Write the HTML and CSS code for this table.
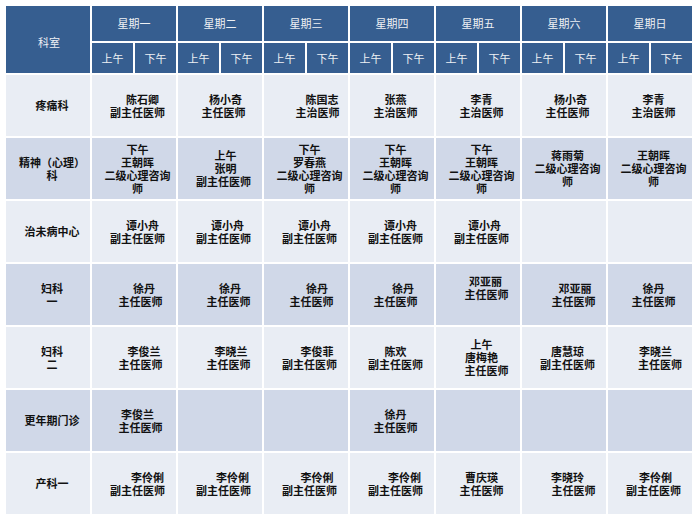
FILE: index.html
```html
<!DOCTYPE html>
<html lang="zh-CN">
<head>
<meta charset="utf-8">
<title>门诊排班表</title>
<link rel="stylesheet" href="styles.css">
</head>
<body>
<div class="schedule">
  <div class="hd corner">科室</div>
  <div class="hd day">星期一</div>
  <div class="hd day">星期二</div>
  <div class="hd day">星期三</div>
  <div class="hd day">星期四</div>
  <div class="hd day">星期五</div>
  <div class="hd day">星期六</div>
  <div class="hd day">星期日</div>
  <div class="hd half">上午</div><div class="hd half">下午</div>
  <div class="hd half">上午</div><div class="hd half">下午</div>
  <div class="hd half">上午</div><div class="hd half">下午</div>
  <div class="hd half">上午</div><div class="hd half">下午</div>
  <div class="hd half">上午</div><div class="hd half">下午</div>
  <div class="hd half">上午</div><div class="hd half">下午</div>
  <div class="hd half">上午</div><div class="hd half">下午</div>

  <!-- 疼痛科 -->
  <div class="cell label light"><span class="ln">疼痛科</span></div>
  <div class="cell slot light"><span class="ln i10">陈石卿</span><span class="ln">副主任医师</span></div>
  <div class="cell slot light"><span class="ln i4">杨小奇</span><span class="ln">主任医师</span></div>
  <div class="cell slot light"><span class="ln i25">陈国志</span><span class="ln i16">主治医师</span></div>
  <div class="cell slot light"><span class="ln">张燕</span><span class="ln">主治医师</span></div>
  <div class="cell slot light"><span class="ln">李青</span><span class="ln">主治医师</span></div>
  <div class="cell slot light"><span class="ln i6">杨小奇</span><span class="ln">主任医师</span></div>
  <div class="cell slot light"><span class="ln">李青</span><span class="ln">主治医师</span></div>

  <!-- 精神（心理）科 -->
  <div class="cell label dark"><span class="ln">精神（心理）</span><span class="ln">科</span></div>
  <div class="cell slot dark"><span class="ln">下午</span><span class="ln">王朝晖</span><span class="ln">二级心理咨询</span><span class="ln">师</span></div>
  <div class="cell slot dark"><span class="ln i4">上午</span><span class="ln i4">张明</span><span class="ln">副主任医师</span></div>
  <div class="cell slot dark"><span class="ln">下午</span><span class="ln">罗春燕</span><span class="ln">二级心理咨询</span><span class="ln">师</span></div>
  <div class="cell slot dark"><span class="ln">下午</span><span class="ln">王朝晖</span><span class="ln">二级心理咨询</span><span class="ln">师</span></div>
  <div class="cell slot dark"><span class="ln">下午</span><span class="ln">王朝晖</span><span class="ln">二级心理咨询</span><span class="ln">师</span></div>
  <div class="cell slot dark"><span class="ln">蒋雨菊</span><span class="ln">二级心理咨询</span><span class="ln">师</span></div>
  <div class="cell slot dark"><span class="ln">王朝晖</span><span class="ln">二级心理咨询</span><span class="ln">师</span></div>

  <!-- 治未病中心 -->
  <div class="cell label light"><span class="ln">治未病中心</span></div>
  <div class="cell slot light"><span class="ln i10">谭小舟</span><span class="ln">副主任医师</span></div>
  <div class="cell slot light"><span class="ln i8">谭小舟</span><span class="ln">副主任医师</span></div>
  <div class="cell slot light"><span class="ln i10">谭小舟</span><span class="ln">副主任医师</span></div>
  <div class="cell slot light"><span class="ln i10">谭小舟</span><span class="ln">副主任医师</span></div>
  <div class="cell slot light"><span class="ln i6">谭小舟</span><span class="ln">副主任医师</span></div>
  <div class="cell slot light"></div>
  <div class="cell slot light"></div>

  <!-- 妇科一 -->
  <div class="cell label dark"><span class="ln">妇科</span><span class="ln">一</span></div>
  <div class="cell slot dark"><span class="ln i13">徐丹</span><span class="ln i6">主任医师</span></div>
  <div class="cell slot dark"><span class="ln i13">徐丹</span><span class="ln i10">主任医师</span></div>
  <div class="cell slot dark"><span class="ln i15">徐丹</span><span class="ln i4">主任医师</span></div>
  <div class="cell slot dark"><span class="ln i15">徐丹</span><span class="ln">主任医师</span></div>
  <div class="cell slot dark"><span class="ln i8">邓亚丽</span><span class="ln i10">主任医师</span><span class="ln blank"></span></div>
  <div class="cell slot dark"><span class="ln i15">邓亚丽</span><span class="ln i12">主任医师</span></div>
  <div class="cell slot dark"><span class="ln">徐丹</span><span class="ln">主任医师</span></div>

  <!-- 妇科二 -->
  <div class="cell label light"><span class="ln">妇科</span><span class="ln">二</span></div>
  <div class="cell slot light"><span class="ln i13">李俊兰</span><span class="ln i6">主任医师</span></div>
  <div class="cell slot light"><span class="ln i15">李晓兰</span><span class="ln i10">主任医师</span></div>
  <div class="cell slot light"><span class="ln i15">李俊菲</span><span class="ln">副主任医师</span></div>
  <div class="cell slot light"><span class="ln">陈欢</span><span class="ln">副主任医师</span></div>
  <div class="cell slot light"><span class="ln">上午</span><span class="ln">唐梅艳</span><span class="ln i10">主任医师</span></div>
  <div class="cell slot light"><span class="ln">唐慧琼</span><span class="ln">副主任医师</span></div>
  <div class="cell slot light"><span class="ln i4">李晓兰</span><span class="ln i13">主任医师</span></div>

  <!-- 更年期门诊 -->
  <div class="cell label dark"><span class="ln">更年期门诊</span></div>
  <div class="cell slot dark"><span class="ln">李俊兰</span><span class="ln i6">主任医师</span></div>
  <div class="cell slot dark"></div>
  <div class="cell slot dark"></div>
  <div class="cell slot dark"><span class="ln">徐丹</span><span class="ln">主任医师</span></div>
  <div class="cell slot dark"></div>
  <div class="cell slot dark"></div>
  <div class="cell slot dark"></div>

  <!-- 产科一 -->
  <div class="cell label light"><span class="ln">产科一</span></div>
  <div class="cell slot light"><span class="ln i20">李伶俐</span><span class="ln">副主任医师</span></div>
  <div class="cell slot light"><span class="ln i18">李伶俐</span><span class="ln">副主任医师</span></div>
  <div class="cell slot light"><span class="ln i15">李伶俐</span><span class="ln">副主任医师</span></div>
  <div class="cell slot light"><span class="ln i18">李伶俐</span><span class="ln">副主任医师</span></div>
  <div class="cell slot light"><span class="ln">曹庆瑛</span><span class="ln">主任医师</span></div>
  <div class="cell slot light"><span class="ln">李晓玲</span><span class="ln i12">主任医师</span></div>
  <div class="cell slot light"><span class="ln i4">李伶俐</span><span class="ln">副主任医师</span></div>
</div>
</body>
</html>
```
FILE: styles.css
```css
html, body {
  margin: 0;
  padding: 0;
  background: #ffffff;
}

body {
  font-family: "Noto Sans CJK SC", "Noto Sans", sans-serif;
}

.schedule {
  margin: 6px 0 0 6px;
  display: grid;
  grid-template-columns: 84px repeat(14, 41px);
  grid-template-rows: 35px 30px repeat(7, 61px);
  gap: 2px;
  width: max-content;
}

.hd {
  background: #365e90;
  color: #eef0f4;
  font-size: 11px;
  line-height: 13px;
  font-weight: 400;
  display: flex;
  align-items: center;
  justify-content: center;
}

.corner {
  grid-row: span 2;
  padding-top: 6px;
  padding-left: 2px;
}

.day {
  grid-column: span 2;
}

.cell {
  display: flex;
  flex-direction: column;
  justify-content: center;
  align-items: center;
  text-align: center;
  font-size: 11px;
  line-height: 13px;
  font-weight: 700;
  color: #111111;
}

.slot {
  grid-column: span 2;
  padding-left: 7px;
}

.label {
  padding-left: 8px;
}

.light {
  background: #e9edf4;
}

.dark {
  background: #d0d8e8;
}

.ln {
  display: block;
  white-space: nowrap;
}

.blank {
  height: 13px;
}

.i4 { padding-left: 4px; }
.i6 { padding-left: 6px; }
.i8 { padding-left: 8px; }
.i10 { padding-left: 10px; }
.i12 { padding-left: 12px; }
.i13 { padding-left: 13px; }
.i15 { padding-left: 15px; }
.i16 { padding-left: 16px; }
.i18 { padding-left: 18px; }
.i20 { padding-left: 20px; }
.i25 { padding-left: 25px; }
```
